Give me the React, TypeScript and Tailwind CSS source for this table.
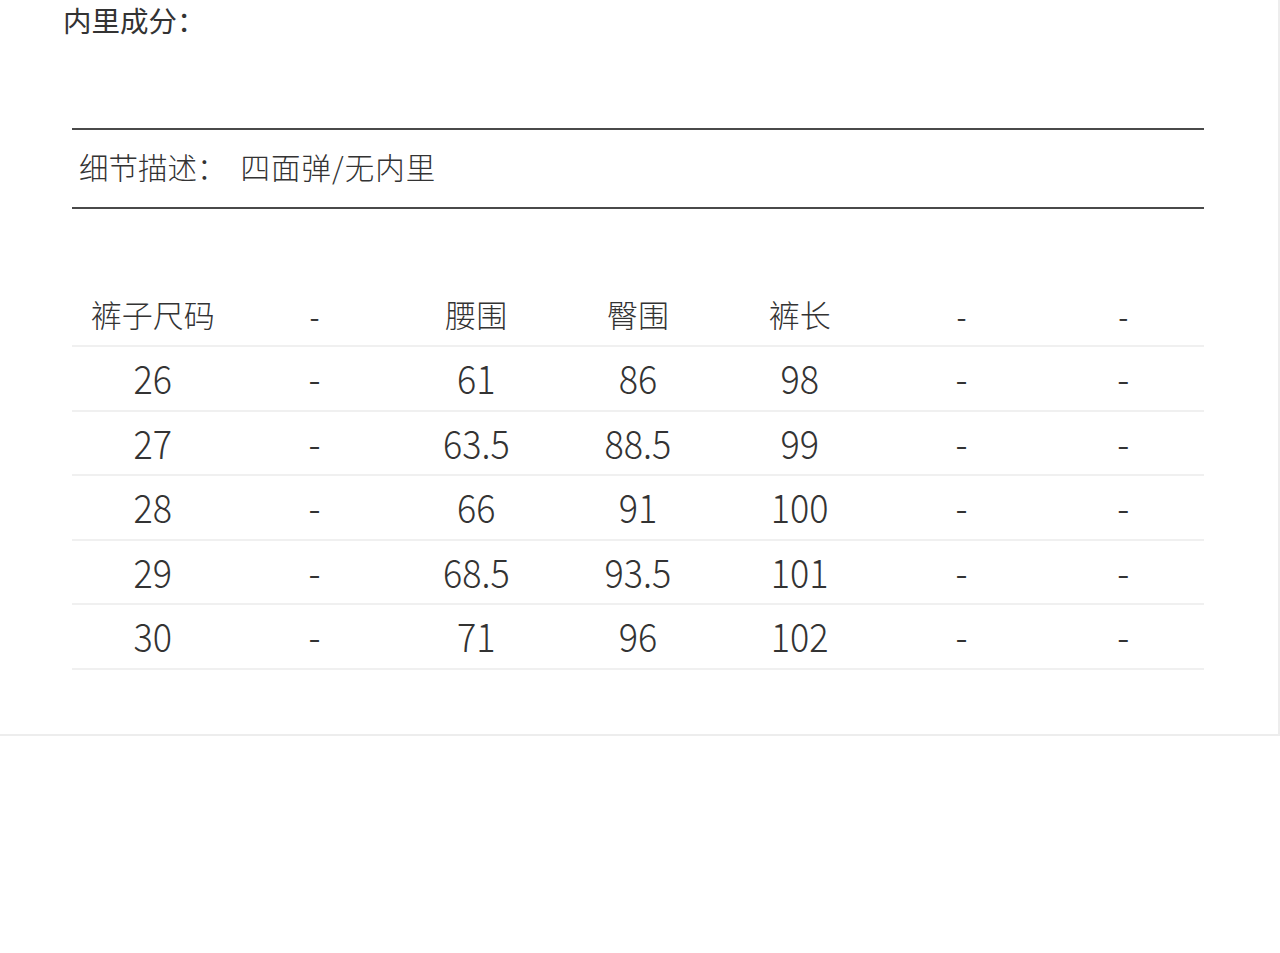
const font = { fontFamily: '"Noto Sans CJK SC", "Noto Sans", sans-serif' }

const headers = ['裤子尺码', '-', '腰围', '臀围', '裤长', '-', '-']

const rows = [
  ['26', '-', '61', '86', '98', '-', '-'],
  ['27', '-', '63.5', '88.5', '99', '-', '-'],
  ['28', '-', '66', '91', '100', '-', '-'],
  ['29', '-', '68.5', '93.5', '101', '-', '-'],
  ['30', '-', '71', '96', '102', '-', '-'],
]

export default function App() {
  return (
    <div className="min-h-[953px] bg-white text-[#333]" style={font}>
      <div className="h-[736px] border-r-2 border-b-2 border-[#ededed]">
        {/* 内里成分 */}
        <div className="pl-[63px] pt-[2px] text-[28.5px] leading-[36px]">内里成分：</div>

        {/* 细节描述 */}
        <div className="ml-[72px] mr-[74px] mt-[90px] border-y-2 border-[#4a4a4a]">
          <div className="flex h-[77px] items-center pl-[7px] pb-[4px] text-[29.5px] font-light">
            <span>细节描述：</span>
            <span className="ml-[14px] tracking-[1px]">四面弹/无内里</span>
          </div>
        </div>

        {/* 尺码表 */}
        <div className="ml-[72px] mr-[74px] mt-[74px]">
          <div className="grid h-[64px] grid-cols-7 items-center border-b-2 border-[#f0f0f0] text-[31px] font-light">
            {headers.map((h, i) => (
              <div key={i} className="text-center">
                {h === '-' ? <span className="inline-block scale-y-[1.25] text-[30px]">-</span> : h}
              </div>
            ))}
          </div>
          {rows.map((r, ri) => (
            <div
              key={ri}
              className="grid h-[64.5px] grid-cols-7 items-center border-b-2 border-[#f0f0f0] text-[36px] font-light"
            >
              {r.map((c, ci) => (
                <div key={ci} className="text-center">
                  <span className="inline-block -translate-y-[2px] scale-y-[1.1]">{c}</span>
                </div>
              ))}
            </div>
          ))}
        </div>
      </div>
    </div>
  )
}
